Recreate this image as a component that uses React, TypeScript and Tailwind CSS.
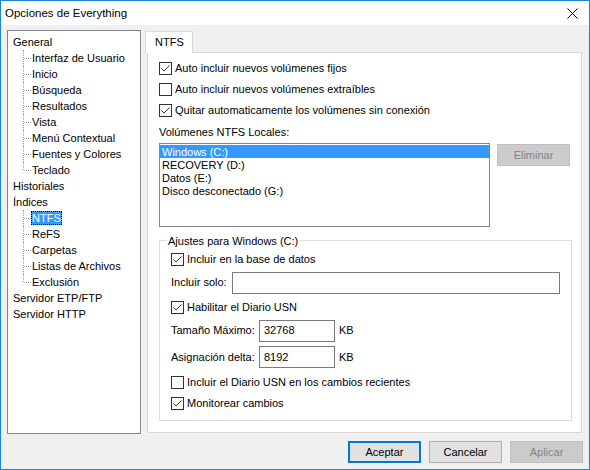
import React from "react";

type TreeItem = { label: string; level: number; last?: boolean; selected?: boolean };

const treeItems: TreeItem[] = [
  { label: "General", level: 0 },
  { label: "Interfaz de Usuario", level: 1 },
  { label: "Inicio", level: 1 },
  { label: "Búsqueda", level: 1 },
  { label: "Resultados", level: 1 },
  { label: "Vista", level: 1 },
  { label: "Menú Contextual", level: 1 },
  { label: "Fuentes y Colores", level: 1 },
  { label: "Teclado", level: 1, last: true },
  { label: "Historiales", level: 0 },
  { label: "Índices", level: 0 },
  { label: "NTFS", level: 1, selected: true },
  { label: "ReFS", level: 1 },
  { label: "Carpetas", level: 1 },
  { label: "Listas de Archivos", level: 1 },
  { label: "Exclusión", level: 1, last: true },
  { label: "Servidor ETP/FTP", level: 0 },
  { label: "Servidor HTTP", level: 0 },
];

const volumes = ["Windows (C:)", "RECOVERY (D:)", "Datos (E:)", "Disco desconectado (G:)"];

function CheckBox({ checked, label }: { checked?: boolean; label: string }) {
  return (
    <div className="flex items-center gap-[3px]">
      <span className="w-[13px] h-[13px] border border-[#333333] bg-white flex items-center justify-center shrink-0">
        {checked && (
          <svg width="11" height="11" viewBox="0 0 11 11">
            <path d="M1.5 5.5 L4 8 L9.5 2.5" fill="none" stroke="#333333" strokeWidth="1" />
          </svg>
        )}
      </span>
      <span>{label}</span>
    </div>
  );
}

function TreeRow({ item }: { item: TreeItem }) {
  if (item.level === 0) {
    return <div className="h-[16px] flex items-center pl-[5px]">{item.label}</div>;
  }
  return (
    <div className="h-[16px] flex items-center">
      {/* dotted connector lines */}
      <div className="relative w-[23px] h-full shrink-0">
        <span
          className={`absolute left-[15px] top-0 w-0 border-l border-dotted border-[#a0a0a0] ${
            item.last ? "h-[8px]" : "h-full"
          }`}
        />
        <span className="absolute left-[16px] top-[8px] w-[7px] h-0 border-t border-dotted border-[#a0a0a0]" />
      </div>
      <span
        className={`px-[1px] leading-[14px] ${
          item.selected ? "bg-[#3399ff] text-white outline outline-dotted outline-[#000] -outline-offset-1" : ""
        }`}
      >
        {item.label}
      </span>
    </div>
  );
}

function Field({ value, width }: { value?: string; width: string }) {
  return (
    <div className={`${width} h-[22px] border border-[#7a7a7a] bg-white flex items-center pl-[4px]`}>
      {value}
    </div>
  );
}

function Button({ label, variant }: { label: string; variant?: "default" | "disabled" }) {
  const cls =
    variant === "default"
      ? "border-2 border-[#0078d7] bg-[#e1e1e1] text-black"
      : variant === "disabled"
      ? "border border-[#bfbfbf] bg-[#cccccc] text-[#838383]"
      : "border border-[#adadad] bg-[#e1e1e1] text-black";
  return <div className={`w-[73px] h-[22px] flex items-center justify-center ${cls}`}>{label}</div>;
}

export default function App() {
  return (
    <div className="w-[590px] h-[470px] border border-[#1c84d6] bg-[#f0f0f0] flex flex-col text-[11px] text-black font-['Liberation_Sans',Arial,sans-serif] leading-[13px] select-none">
      {/* Title bar */}
      <div className="h-[24px] bg-white flex items-center justify-between pl-[4px] pr-[11px] shrink-0">
        <span className="text-[11.5px]">Opciones de Everything</span>
        <svg width="11" height="11" viewBox="0 0 11 11">
          <path d="M0.5 0.5 L10.5 10.5 M10.5 0.5 L0.5 10.5" stroke="#000" strokeWidth="1" />
        </svg>
      </div>

      {/* Body */}
      <div className="flex-1 flex pl-[6px] pt-[5px]">
        {/* Tree */}
        <div className="w-[134px] h-[404px] border border-[#828790] bg-white pt-[3px] shrink-0">
          {treeItems.map((item) => (
            <TreeRow key={item.label} item={item} />
          ))}
        </div>

        {/* Right side */}
        <div className="ml-[4px] mt-[1px] w-[437px] flex flex-col">
          {/* Tab strip */}
          <div className="h-[21px] flex items-start">
            <div className="relative z-10 w-[48px] h-[22px] bg-white border border-b-0 border-[#d9d9d9] pl-[9px] pt-[4px]">
              NTFS
            </div>
          </div>

          {/* Panel */}
          <div className="ml-[2px] w-[435px] h-[381px] bg-white border border-[#d9d9d9] pl-[11px] pt-[5px]">
            <div className="h-[21px] flex items-center">
              <CheckBox checked label="Auto incluir nuevos volúmenes fijos" />
            </div>
            <div className="h-[21px] flex items-center">
              <CheckBox label="Auto incluir nuevos volúmenes extraíbles" />
            </div>
            <div className="h-[21px] flex items-center">
              <CheckBox checked label="Quitar automaticamente los volúmenes sin conexión" />
            </div>
            <div className="h-[22px] flex items-center">Volúmenes NTFS Locales:</div>

            <div className="flex items-start">
              <div className="w-[331px] h-[84px] border border-[#828790] bg-white pt-[1px]">
                {volumes.map((v, i) => (
                  <div
                    key={v}
                    className={`h-[13px] leading-[15px] pl-[2px] ${i === 0 ? "bg-[#3399ff] text-white" : ""}`}
                  >
                    {v}
                  </div>
                ))}
              </div>
              <div className="ml-[7px] mt-[1px]">
                <Button label="Eliminar" variant="disabled" />
              </div>
            </div>

            {/* Group box */}
            <div className="relative mt-[13px] w-[413px] h-[181px] border border-[#dcdcdc] pl-[11px] pt-[8px]">
              <span className="absolute left-[7px] -top-[6px] bg-white px-[1px]">Ajustes para Windows (C:)</span>
              <div className="h-[21px] flex items-center">
                <CheckBox checked label="Incluir en la base de datos" />
              </div>
              <div className="h-[25px] flex items-center">
                <span className="w-[61px]">Incluir solo:</span>
                <Field width="w-[328px]" />
              </div>
              <div className="h-[24px] flex items-center">
                <CheckBox checked label="Habilitar el Diario USN" />
              </div>
              <div className="h-[23px] flex items-center">
                <span className="w-[88px]">Tamaño Máximo:</span>
                <Field width="w-[76px]" value="32768" />
                <span className="ml-[4px]">KB</span>
              </div>
              <div className="h-[30px] flex items-center">
                <span className="w-[88px]">Asignación delta:</span>
                <Field width="w-[76px]" value="8192" />
                <span className="ml-[4px]">KB</span>
              </div>
              <div className="h-[20px] flex items-center">
                <CheckBox label="Incluir el Diario USN en los cambios recientes" />
              </div>
              <div className="h-[22px] flex items-center">
                <CheckBox checked label="Monitorear cambios" />
              </div>
            </div>
          </div>

          {/* Buttons */}
          <div className="mt-[8px] flex justify-end gap-[8px] mr-[-1px]">
            <Button label="Aceptar" variant="default" />
            <Button label="Cancelar" />
            <Button label="Aplicar" variant="disabled" />
          </div>
        </div>
      </div>
    </div>
  );
}
